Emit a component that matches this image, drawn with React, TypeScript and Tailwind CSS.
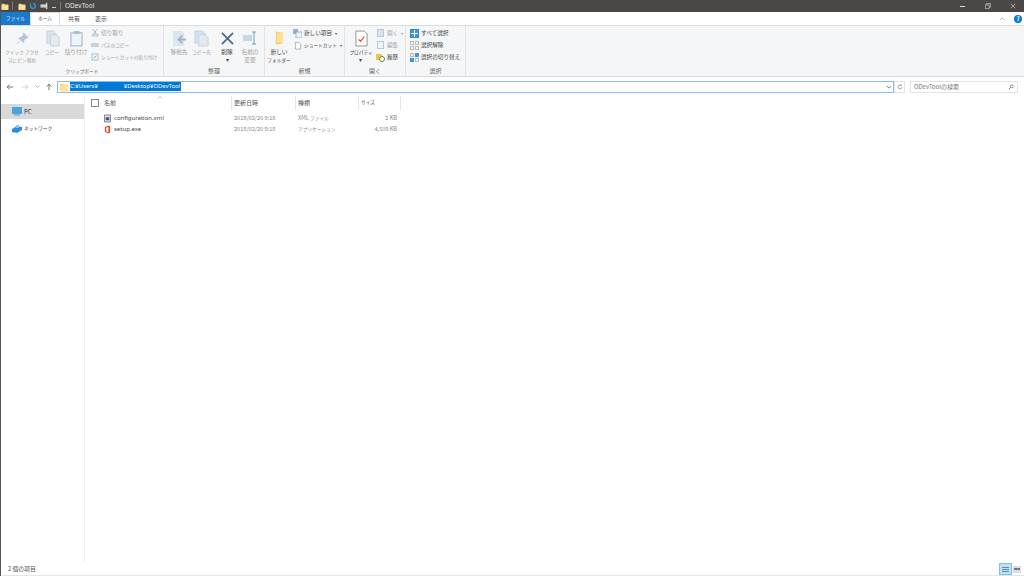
import type { ReactNode } from "react";

const font = { fontFamily: '"Noto Sans CJK JP", "Noto Sans", sans-serif' };
const latin = { fontFamily: '"Noto Sans", sans-serif' };

function Folder({ className }: { className: string }) {
  return (
    <svg viewBox="0 0 12 12" className={className}>
      <path d="M1 2h4l1 1h5v8H1z" fill="#fcd46e" />
      <path d="M1 4h10v7H1z" fill="#f8e3a0" />
    </svg>
  );
}

// kana runs are narrow in the original UI font, so they get a smaller size
const Kana = ({ children }: { children: ReactNode }) => <span className="text-[4.7px]">{children}</span>;

function BigButton({ label, icon, disabled, width }: { label: ReactNode; icon: ReactNode; disabled?: boolean; width: string }) {
  return (
    <div className={`flex flex-col items-center shrink-0 mt-[1px] ${width}`}>
      <div className="h-[20px] flex items-center justify-center">{icon}</div>
      <div className={`text-[5.7px] leading-[8px] text-center whitespace-nowrap ${disabled ? "text-[#a0a0a0]" : "text-[#444]"}`}>{label}</div>
    </div>
  );
}

function SmallRow({ icon, label, disabled, arrow }: { icon: ReactNode; label: ReactNode; disabled?: boolean; arrow?: boolean }) {
  return (
    <div className={`flex items-center gap-[2px] h-[12px] text-[5.6px] whitespace-nowrap ${disabled ? "text-[#a0a0a0]" : "text-[#444]"}`}>
      <div className="w-[9px] h-[9px] shrink-0 flex items-center justify-center">{icon}</div>
      <span>{label}</span>
      {arrow && <span className="text-[4px] ml-[1px]">▾</span>}
    </div>
  );
}

function Group({ label, width, children }: { label: ReactNode; width: string; children: ReactNode }) {
  return (
    <div className={`flex flex-col h-full border-r border-[#e2e3e4] shrink-0 ${width}`}>
      <div className="flex-1 flex pt-[1px] px-[2px] min-h-0">{children}</div>
      <div className="h-[11px] text-center text-[6px] leading-[12px] text-[#666]">{label}</div>
    </div>
  );
}

function Header({ label, width }: { label: ReactNode; width: string }) {
  return (
    <div className={`h-full shrink-0 border-r border-[#e5e5e5] pl-[2px] pb-[1px] flex items-center text-[6px] text-[#555] ${width}`}>
      {label}
    </div>
  );
}

function Row({ icon, name, type, size }: { icon: ReactNode; name: string; type: ReactNode; size: string }) {
  return (
    <div className="h-[11px] flex items-center text-[5.6px]">
      <div className="w-[147px] shrink-0 pl-[18px] flex items-center gap-[2px]">
        <div className="w-[9px] h-[9px] flex items-center justify-center">{icon}</div>
        <span className="text-[6px] text-[#444]" style={latin}>{name}</span>
      </div>
      <div className="w-[64px] shrink-0 pl-[2px] text-[#888] whitespace-nowrap">2018/02/20 9:18</div>
      <div className="w-[63px] shrink-0 pl-[2px] text-[#888] whitespace-nowrap">{type}</div>
      <div className="w-[38px] shrink-0 text-right text-[#888]">{size}</div>
    </div>
  );
}

export default function App() {
  return (
    <div className="w-[1024px] h-[576px] overflow-hidden bg-white flex flex-col border-l border-[#555]" style={font}>
      {/* title bar */}
      <div className="h-[12px] shrink-0 bg-[#4a4744] flex items-center text-white">
        <Folder className="w-[8px] h-[9px]" />
        <div className="w-px h-[8px] bg-[#777] ml-[3px]" />
        <Folder className="w-[8px] h-[9px] ml-[5px]" />
        <svg viewBox="0 0 10 10" className="w-[8px] h-[8px] ml-[3px]">
          <path d="M2 2v3a3 3 0 1 0 3-3" fill="none" stroke="#2f9be8" strokeWidth="1.6" />
        </svg>
        <svg viewBox="0 0 10 10" className="w-[9px] h-[8px] ml-[3px]">
          <rect x="0" y="3" width="7" height="4" fill="#c8d4df" />
          <rect x="7" y="1" width="1.5" height="8" fill="#e5e5e5" />
        </svg>
        <div className="w-[4px] h-px bg-[#ccc] ml-[3px] mt-[3px]" />
        <div className="w-px h-[8px] bg-[#777] ml-[4px]" />
        <span className="ml-[4px] text-[6.5px] text-[#e6e6e6]" style={latin}>ODevTool</span>
        <div className="flex-1" />
        <div className="w-[5px] h-px bg-[#ddd] mr-[20px]" />
        <svg viewBox="0 0 8 8" className="w-[6px] h-[6px] mr-[19px]">
          <path d="M.5 2.500h5v5h-5zM2 2.500V.5h5.500v5H5.500" fill="none" stroke="#ddd" strokeWidth=".8" />
        </svg>
        <svg viewBox="0 0 8 8" className="w-[6px] h-[6px] mr-[8px]">
          <path d="M1 1l6 6M7 1L1 7" stroke="#ddd" strokeWidth=".8" />
        </svg>
      </div>

      {/* tabs */}
      <div className="h-[13px] shrink-0 flex items-stretch text-[6px] text-[#444]">
        <div className="w-[29px] bg-[#1979ca] text-white flex items-center justify-center"><Kana>ファイル</Kana></div>
        <div className="w-[30px] border-x border-t border-[#dadbdc] flex items-center justify-center"><Kana>ホーム</Kana></div>
        <div className="w-[28px] flex items-center justify-center">共有</div>
        <div className="w-[26px] flex items-center justify-center">表示</div>
        <div className="flex-1" />
        <svg viewBox="0 0 8 8" className="w-[6px] h-[6px] self-center mr-[9px]">
          <path d="M1 5.500l3-3 3 3" fill="none" stroke="#999" />
        </svg>
        <div className="w-[8px] h-[8px] rounded-full bg-[#0a78d7] self-center mr-[2px] text-white text-[6px] leading-[8px] text-center font-bold">?</div>
      </div>

      {/* ribbon */}
      <div className="h-[52px] shrink-0 bg-[#f5f6f7] border-y border-[#dadbdc] flex">
        <Group label={<Kana>クリップボード</Kana>} width="w-[163px]">
          <BigButton
            width="w-[38px]"
            disabled
            label={<Kana>クイック アクセ<br />スにピン留め</Kana>}
            icon={
              <svg viewBox="0 0 14 14" className="w-[13px] h-[13px]">
                <path d="M8 1l5 5-2 .5-2.500 2.500-.5 2.500-5-5 2.500-.5L8 3.500zM4 10l-3 3" fill="#b6c4d2" stroke="#b6c4d2" />
              </svg>
            }
          />
          <BigButton width="w-[22px]" disabled label={<Kana>コピー</Kana>} icon={<svg viewBox="0 0 16 18" className="w-[15px] h-[17px]"><path d="M2 1h7l3 3v10H2z" fill="#d7e3ef" stroke="#c3d2e0" /><path d="M6 5h6l3 3v9H6z" fill="#e2ebf4" stroke="#c3d2e0" /></svg>} />
          <BigButton width="w-[26px]" disabled label="貼り付け" icon={<svg viewBox="0 0 14 18" className="w-[13px] h-[17px]"><path d="M1 3h12v14H1z" fill="#eef3f8" stroke="#a9bdcf" strokeWidth="1.300" /><rect x="4" y="1" width="6" height="3" fill="#a9bdcf" /></svg>} />
          <div className="flex flex-col ml-[1px]">
            <SmallRow disabled label="切り取り" icon={<svg viewBox="0 0 9 9" className="w-[8px] h-[8px]"><path d="M2 0l4 6M7 0L3 6" stroke="#a9b4bf" fill="none" /><circle cx="2.500" cy="7" r="1.300" fill="none" stroke="#a9b4bf" /><circle cx="6.500" cy="7" r="1.300" fill="none" stroke="#a9b4bf" /></svg>} />
            <SmallRow disabled label={<Kana>パスのコピー</Kana>} icon={<div className="w-[8px] h-[4px] bg-[#c5d3e0]" />} />
            <SmallRow disabled label={<Kana>ショートカットの貼り付け</Kana>} icon={<svg viewBox="0 0 9 9" className="w-[8px] h-[8px]"><path d="M1 1h7v7H1z" fill="#eef3f8" stroke="#a9bdcf" /><path d="M3 6l3-3" stroke="#7f9ab3" /></svg>} />
          </div>
        </Group>
        <Group label="整理" width="w-[101px]">
          <BigButton width="w-[26px]" disabled label="移動先" icon={<svg viewBox="0 0 16 18" className="w-[15px] h-[17px]"><path d="M1 1h9l3 3v13H1z" fill="#dbe6f1" /><path d="M15 10H8M11 6l-4 4 4 4" fill="none" stroke="#9db5cb" strokeWidth="2" /></svg>} />
          <BigButton width="w-[19px]" disabled label={<Kana>コピー先</Kana>} icon={<svg viewBox="0 0 16 18" className="w-[15px] h-[17px]"><path d="M1 1h8l3 3v10H1z" fill="#d7e3ef" stroke="#c3d2e0" /><path d="M5 5h7l3 3v9H5z" fill="#e2ebf4" stroke="#c3d2e0" /></svg>} />
          <div className="ml-[3px] shrink-0 flex">
            <BigButton
              width="w-[26px]"
              label={<>削除<br />▾</>}
              icon={<svg viewBox="0 0 14 14" className="w-[13px] h-[13px]"><path d="M1 1l12 12M13 1L1 13" stroke="#4f6d8c" strokeWidth="2" /></svg>}
            />
          </div>
          <BigButton
            width="w-[20px]"
            disabled
            label={<>名前の<br />変更</>}
            icon={<svg viewBox="0 0 16 14" className="w-[16px] h-[14px]"><rect x="1" y="4" width="9" height="6" fill="#c7d6e5" /><path d="M12 1v12M10 1h4M10 13h4" stroke="#7f97ad" fill="none" /></svg>}
          />
        </Group>
        <Group label="新規" width="w-[80px]">
          <BigButton
            width="w-[24px]"
            label={<>新しい<br /><Kana>フォルダー</Kana></>}
            icon={<svg viewBox="0 0 12 16" className="w-[11px] h-[16px]"><path d="M2 1l7 1v12l-7 1z" fill="#f6c959" /><path d="M3 2h7v11H3z" fill="#fbe29a" /></svg>}
          />
          <div className="flex flex-col ml-[2px]">
            <SmallRow label="新しい項目" arrow icon={<svg viewBox="0 0 9 9" className="w-[9px] h-[9px]"><rect x="0" y="0" width="5" height="5" fill="#8fb4d4" /><rect x="3" y="3" width="6" height="6" fill="#eef3f8" stroke="#8a9bab" strokeWidth=".7" /></svg>} />
            <SmallRow label={<Kana>ショートカット</Kana>} arrow icon={<svg viewBox="0 0 9 9" className="w-[8px] h-[9px]"><path d="M1.500 1h4l2 2v5.500h-6z" fill="#fff" stroke="#7d8d9c" strokeWidth=".7" /></svg>} />
          </div>
        </Group>
        <Group label="開く" width="w-[61px]">
          <BigButton
            width="w-[28px]"
            label={<><Kana>プロパティ</Kana><br />▾</>}
            icon={<svg viewBox="0 0 14 18" className="w-[13px] h-[17px]"><path d="M1 1h9l3 3v13H1z" fill="#fff" stroke="#8d8d8d" /><path d="M4 10l2 2 4-5" fill="none" stroke="#e0552b" strokeWidth="1.400" /></svg>}
          />
          <div className="flex flex-col ml-[1px]">
            <SmallRow disabled label="開く" arrow icon={<div className="w-[7px] h-[8px] bg-[#d9e4ef] border border-[#b9c9d8]" />} />
            <SmallRow disabled label="編集" icon={<div className="w-[7px] h-[8px] bg-[#eef3f8] border border-[#b9c9d8]" />} />
            <SmallRow label="履歴" icon={<svg viewBox="0 0 9 9" className="w-[9px] h-[9px]"><rect x="0" y="1" width="6" height="6" fill="#e9c74f" /><circle cx="6" cy="6" r="2.500" fill="#fff" stroke="#5a8a3a" /></svg>} />
          </div>
        </Group>
        <Group label="選択" width="w-[60px]">
          <div className="flex flex-col ml-[2px]">
            <SmallRow label="すべて選択" icon={<div className="w-[9px] h-[9px] grid grid-cols-2 gap-px bg-white border border-[#2f86d0]"><div className="bg-[#3f96dc]" /><div className="bg-[#3f96dc]" /><div className="bg-[#3f96dc]" /><div className="bg-[#3f96dc]" /></div>} />
            <SmallRow label="選択解除" icon={<div className="w-[9px] h-[9px] grid grid-cols-2 gap-px"><div className="border border-[#bbb]" /><div className="border border-[#bbb]" /><div className="border border-[#bbb]" /><div className="border border-[#bbb]" /></div>} />
            <SmallRow label="選択の切り替え" icon={<div className="w-[9px] h-[9px] grid grid-cols-2 gap-px"><div className="border border-[#bbb]" /><div className="bg-[#3f96dc]" /><div className="bg-[#3f96dc]" /><div className="border border-[#bbb]" /></div>} />
          </div>
        </Group>
      </div>

      {/* address row */}
      <div className="h-[19px] shrink-0 flex items-center">
        <svg viewBox="0 0 10 10" className="w-[8px] h-[8px] ml-[5px]"><path d="M9 5H1.500M4.500 2l-3 3 3 3" fill="none" stroke="#555" /></svg>
        <svg viewBox="0 0 10 10" className="w-[8px] h-[8px] ml-[7px]"><path d="M1 5h7.500M5.500 2l3 3-3 3" fill="none" stroke="#ccc" /></svg>
        <svg viewBox="0 0 8 8" className="w-[5px] h-[5px] ml-[6px]"><path d="M1 2.500l3 3 3-3" fill="none" stroke="#888" /></svg>
        <svg viewBox="0 0 10 10" className="w-[8px] h-[8px] ml-[5px]"><path d="M5 9V1.500M2 4.500l3-3 3 3" fill="none" stroke="#555" /></svg>
        <div className="ml-[4px] w-[837px] h-[12px] border border-[#8ebce8] flex items-center">
          <Folder className="w-[10px] h-[10px] ml-[1px]" />
          <span className="ml-[1px] bg-[#0078d7] text-white text-[5.9px] leading-[9px] w-[111px] whitespace-pre" style={latin}>
            C:¥Users¥                 ¥Desktop¥ODevTool
          </span>
          <div className="flex-1" />
          <svg viewBox="0 0 8 8" className="w-[6px] h-[6px] mr-[1px]"><path d="M1 2.500l3 3 3-3" fill="none" stroke="#555" /></svg>
        </div>
        <div className="w-[11px] h-[12px] border border-[#e3e3e3] flex items-center justify-center">
          <svg viewBox="0 0 8 8" className="w-[6px] h-[6px]"><path d="M6.500 4a2.500 2.500 0 1 1-1-2M5.500 .5V2H4" fill="none" stroke="#666" strokeWidth=".8" /></svg>
        </div>
        <div className="ml-[5px] w-[108px] h-[12px] border border-[#e3e3e3] flex items-center pl-[3px] text-[6px] text-[#777]">
          ODevToolの検索
          <div className="flex-1" />
          <svg viewBox="0 0 8 8" className="w-[6px] h-[6px] mr-[3px]"><circle cx="5" cy="3" r="2" fill="none" stroke="#555" strokeWidth=".8" /><path d="M3.500 4.500L1 7" stroke="#555" /></svg>
        </div>
      </div>

      {/* main */}
      <div className="flex-1 flex min-h-0">
        <div className="w-[84px] shrink-0 border-r border-[#eeeeee] pt-[8px] text-[6px] text-[#333]">
          <div className="h-[15px] bg-[#d9d9d9] flex items-center pl-[11px] gap-[2px]">
            <svg viewBox="0 0 10 9" className="w-[10px] h-[9px]"><rect x="0" y="0" width="10" height="7" fill="#4ba3e0" /><rect x="2" y="7" width="6" height="2" fill="#9fb6c9" /></svg>
            PC
          </div>
          <div className="h-[17px] mt-[1px] flex items-center pl-[11px] gap-[2px]">
            <svg viewBox="0 0 10 9" className="w-[10px] h-[9px]"><path d="M0 5l5-3 5 1v3l-5 3-5-1z" fill="#2f8fd6" /><path d="M4 1h3v3H4z" fill="#8cc4ea" /></svg>
            <Kana>ネットワーク</Kana>
          </div>
        </div>
        <div className="flex-1 flex flex-col relative">
          <svg viewBox="0 0 8 4" className="absolute left-[72px] top-0 w-[6px] h-[3px]"><path d="M1 3.500l3-3 3 3" fill="none" stroke="#999" strokeWidth=".8" /></svg>
          <div className="h-[14px] flex items-center">
            <div className="w-[147px] h-full shrink-0 border-r border-[#e5e5e5] flex items-center pl-[6px] pb-[1px] text-[6px] text-[#555]">
              <div className="w-[8px] h-[8px] border border-[#888] mr-[5px]" />
              名前
            </div>
            <Header label="更新日時" width="w-[64px]" />
            <Header label="種類" width="w-[63px]" />
            <Header label={<Kana>サイズ</Kana>} width="w-[42px]" />
          </div>
          <div className="pt-[3px]">
            <Row
              name="configuration.xml"
              type={<>XML <Kana>ファイル</Kana></>}
              size="2 KB"
              icon={<svg viewBox="0 0 8 9" className="w-[7px] h-[9px]"><path d="M.5.5h7v8h-7z" fill="#dfe3ef" stroke="#777" /><rect x="2" y="3" width="4" height="3.500" fill="#4f4f8f" /></svg>}
            />
            <Row
              name="setup.exe"
              type={<Kana>アプリケーション</Kana>}
              size="4,509 KB"
              icon={<svg viewBox="0 0 8 9" className="w-[7px] h-[9px]"><path d="M1 2l4-2 2 1v7l-2 1-4-2z" fill="#e8481c" /><path d="M2.500 2.500L5 1.500v6l-2.500-1z" fill="#fff" /></svg>}
            />
          </div>
        </div>
      </div>

      {/* status bar */}
      <div className="h-[14px] shrink-0 border-b border-[#e5e5e5] flex items-center text-[5.8px] text-[#555] pt-[1px]">
        <span className="ml-[7px]">2 個の項目</span>
        <div className="flex-1" />
        <div className="w-[13px] h-[12px] bg-[#bfe0f5] border border-[#7cc0ec] flex flex-col justify-center gap-px px-[2px]">
          <div className="h-px bg-[#5f87a6]" />
          <div className="h-px bg-[#5f87a6]" />
          <div className="h-px bg-[#5f87a6]" />
        </div>
        <div className="w-[8px] h-[7px] ml-[1px] mr-[3px] bg-[#ddd] flex items-center px-px">
          <div className="w-full h-[2px] bg-[#5f7f9a]" />
        </div>
      </div>
    </div>
  );
}
